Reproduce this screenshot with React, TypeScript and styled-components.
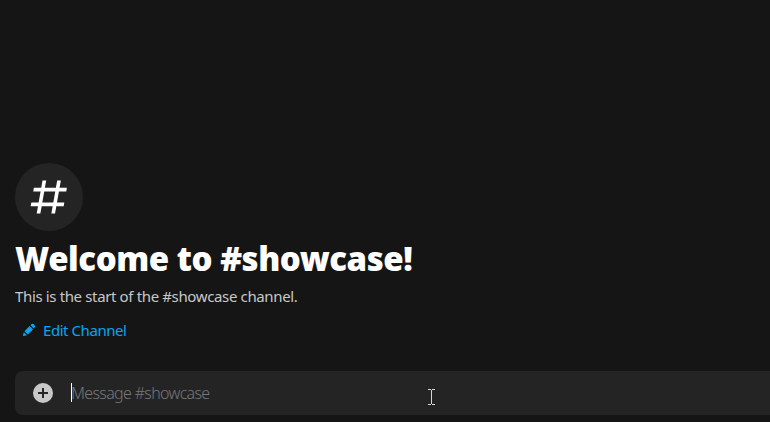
import React from "react";
import styled, { createGlobalStyle } from "styled-components";

const GlobalStyle = createGlobalStyle`
  * { box-sizing: border-box; }
  body {
    margin: 0;
    background: #151515;
    font-family: "Noto Sans", "Open Sans", sans-serif;
    overflow: hidden;
  }
`;

const Chat = styled.main`
  position: relative;
  display: flex;
  flex-direction: column;
  justify-content: flex-end;
  width: 770px;
  height: 422px;
  padding: 0 0 7px 15px;
  background: #151515;
`;

const ChannelBadge = styled.div`
  display: flex;
  align-items: center;
  justify-content: center;
  width: 68px;
  height: 68px;
  border-radius: 50%;
  background: #242424;
`;

const Title = styled.h1`
  margin: 8px 0 0;
  font-size: 33px;
  font-weight: 900;
  line-height: 40px;
  letter-spacing: -0.46px;
  white-space: nowrap;
  color: #fff;
`;

const Subtitle = styled.p`
  margin: 7px 0 0;
  font-size: 15px;
  line-height: 20px;
  letter-spacing: -0.36px;
  white-space: nowrap;
  color: #c8c8c8;
`;

const EditButton = styled.button`
  display: flex;
  align-items: center;
  align-self: flex-start;
  gap: 6px;
  height: 32px;
  margin: 8px 0 0;
  padding: 0 6px;
  border: 0;
  background: transparent;
  font-family: inherit;
  font-size: 15px;
  line-height: 20px;
  letter-spacing: -0.44px;
  white-space: nowrap;
  color: #06a6f0;
`;

const Composer = styled.div`
  display: flex;
  align-items: center;
  height: 44px;
  margin-top: 25px;
  padding-left: 16px;
  border-radius: 8px 0 0 8px;
  background: #242424;
`;

const Caret = styled.span`
  width: 1px;
  height: 19px;
  margin: -1px -1px 0 16px;
  background: #fff;
`;

const Placeholder = styled.span`
  font-size: 16px;
  font-weight: 300;
  line-height: 22px;
  letter-spacing: -0.66px;
  color: #74777b;
`;

const Pointer = styled.svg`
  position: absolute;
  left: 428px;
  top: 389px;
`;

const HashIcon = () => (
  <svg width="44" height="44" viewBox="0 0 24 24" fill="#fff">
    <path
      fillRule="evenodd"
      d="M5.29 21 6 17H2l.35-2h4l1.06-6h-4l.35-2h4l.71-4h2l-.71 4h6l.71-4h2l-.71 4h4l-.35 2h-4l-1.06 6h4L20 17h-4l-.71 4h-2l.71-4H8l-.71 4ZM9.41 9l-1.06 6h6l1.06-6Z"
    />
  </svg>
);

const PencilIcon = () => (
  <svg width="16" height="16" viewBox="0 0 24 24" fill="currentColor">
    <path d="M19.293 9.83l.648-.647a3.623 3.623 0 0 0-5.124-5.124l-.647.648ZM12.896 5.977 5.185 13.69l5.123 5.123 7.712-7.714ZM4.119 20.97l4.64-1.159-4.572-4.572-1.16 4.64a.9.9 0 0 0 1.092 1.091Z" />
  </svg>
);

const PlusIcon = () => (
  <svg width="24" height="24" viewBox="0 0 24 24">
    <circle cx="12" cy="12" r="10" fill="#c8c8c8" />
    <path d="M12 7v10M7 12h10" stroke="#242424" strokeWidth="2" />
  </svg>
);

export default function App() {
  return (
    <>
      <GlobalStyle />
      <Chat>
        <ChannelBadge>
          <HashIcon />
        </ChannelBadge>
        <Title>Welcome to #showcase!</Title>
        <Subtitle>This is the start of the #showcase channel.</Subtitle>
        <EditButton>
          <PencilIcon />
          Edit Channel
        </EditButton>
        <Composer>
          <PlusIcon />
          <Caret />
          <Placeholder>Message #showcase</Placeholder>
        </Composer>
        <Pointer width="7" height="16" viewBox="0 0 7 16" shapeRendering="crispEdges">
          <path d="M0 .5h3M4 .5h3M3.5 1v14M0 15.5h3M4 15.5h3" stroke="#d8d8d8" fill="none" />
        </Pointer>
      </Chat>
    </>
  );
}
